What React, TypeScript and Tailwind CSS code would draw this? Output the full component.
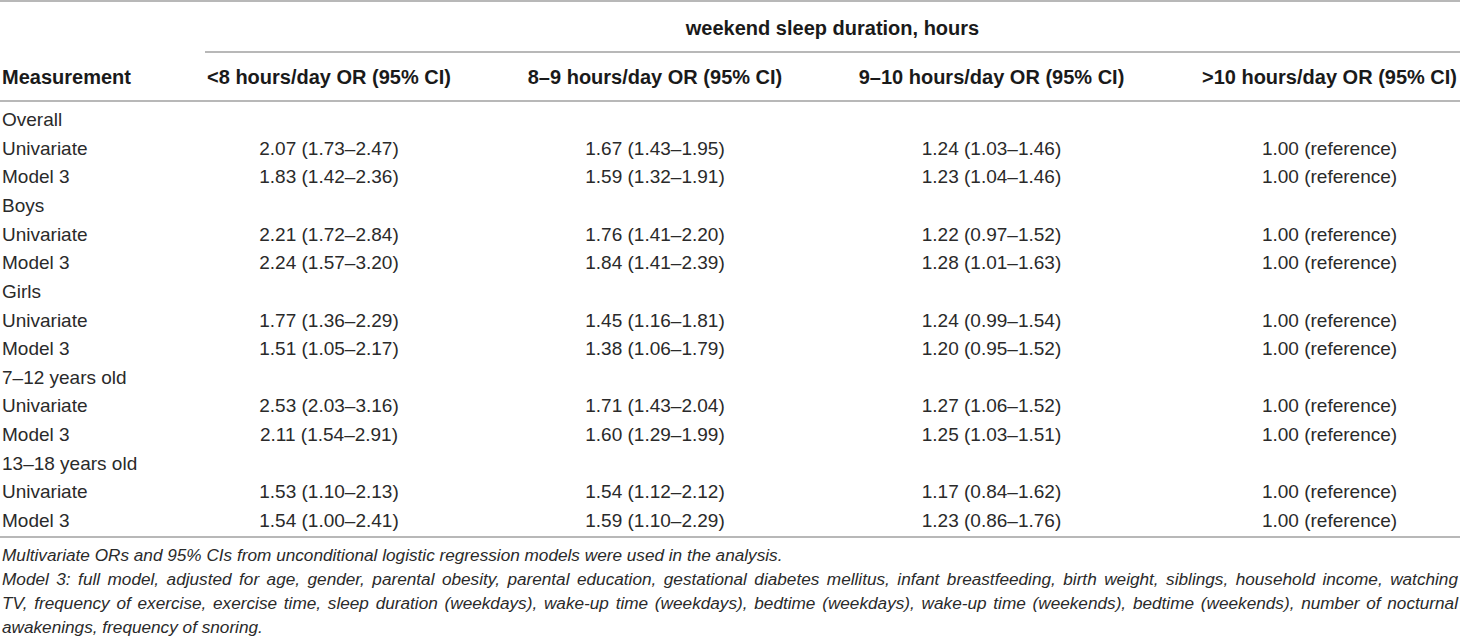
import React from "react";

type Row = { label: string; vals?: string[] };

const rows: Row[] = [
  { label: "Overall" },
  { label: "Univariate", vals: ["2.07 (1.73–2.47)", "1.67 (1.43–1.95)", "1.24 (1.03–1.46)", "1.00 (reference)"] },
  { label: "Model 3", vals: ["1.83 (1.42–2.36)", "1.59 (1.32–1.91)", "1.23 (1.04–1.46)", "1.00 (reference)"] },
  { label: "Boys" },
  { label: "Univariate", vals: ["2.21 (1.72–2.84)", "1.76 (1.41–2.20)", "1.22 (0.97–1.52)", "1.00 (reference)"] },
  { label: "Model 3", vals: ["2.24 (1.57–3.20)", "1.84 (1.41–2.39)", "1.28 (1.01–1.63)", "1.00 (reference)"] },
  { label: "Girls" },
  { label: "Univariate", vals: ["1.77 (1.36–2.29)", "1.45 (1.16–1.81)", "1.24 (0.99–1.54)", "1.00 (reference)"] },
  { label: "Model 3", vals: ["1.51 (1.05–2.17)", "1.38 (1.06–1.79)", "1.20 (0.95–1.52)", "1.00 (reference)"] },
  { label: "7–12 years old" },
  { label: "Univariate", vals: ["2.53 (2.03–3.16)", "1.71 (1.43–2.04)", "1.27 (1.06–1.52)", "1.00 (reference)"] },
  { label: "Model 3", vals: ["2.11 (1.54–2.91)", "1.60 (1.29–1.99)", "1.25 (1.03–1.51)", "1.00 (reference)"] },
  { label: "13–18 years old" },
  { label: "Univariate", vals: ["1.53 (1.10–2.13)", "1.54 (1.12–2.12)", "1.17 (0.84–1.62)", "1.00 (reference)"] },
  { label: "Model 3", vals: ["1.54 (1.00–2.41)", "1.59 (1.10–2.29)", "1.23 (0.86–1.76)", "1.00 (reference)"] },
];

const grid = "grid grid-cols-[132px_248px_258px_269px_1fr] gap-x-[73px]";

export default function App() {
  return (
    <div className="w-[1460px] h-[643px] bg-white font-['Liberation_Sans',Arial,sans-serif] overflow-hidden">
      <div className="border-t-2 border-b-2 border-[#b8b8b8]">
        <div className={grid}>
          <div className="h-[51px]" />
          <div className="col-span-4 h-[51px] border-b-2 border-[#b8b8b8] flex items-center justify-center pt-[2px] text-[20px] font-bold text-[#1a1a1a]">
            weekend sleep duration, hours
          </div>
        </div>
        <div className={`${grid} h-[47px] items-center text-[20px] font-bold text-[#1a1a1a] whitespace-nowrap`}>
          <div className="pl-[2px]">Measurement</div>
          <div className="text-center">&lt;8 hours/day OR (95% CI)</div>
          <div className="text-center">8–9 hours/day OR (95% CI)</div>
          <div className="text-center">9–10 hours/day OR (95% CI)</div>
          <div className="text-center">&gt;10 hours/day OR (95% CI)</div>
        </div>
      </div>
      <div className="border-b-2 border-[#b8b8b8] pt-[4px] pb-0 text-[19px] text-[#2a2a2a] whitespace-nowrap">
        {rows.map((r, i) => (
          <div key={i} className={`${grid} h-[28.65px] items-center`}>
            <div className="pl-[2px]">{r.label}</div>
            {r.vals ? (
              r.vals.map((v, j) => (
                <div key={j} className="text-center">
                  {v}
                </div>
              ))
            ) : (
              <>
                <div />
                <div />
                <div />
                <div />
              </>
            )}
          </div>
        ))}
      </div>
      <div className="pt-[5px] pl-[2px] pr-[2px] text-[17.2px] italic leading-[24px] text-[#2a2a2a]">
        <div className="whitespace-nowrap">Multivariate ORs and 95% CIs from unconditional logistic regression models were used in the analysis.</div>
        <div className="text-justify [text-align-last:justify]">
          Model 3: full model, adjusted for age, gender, parental obesity, parental education, gestational diabetes mellitus, infant breastfeeding, birth weight, siblings, household income, watching
        </div>
        <div className="text-justify [text-align-last:justify]">
          TV, frequency of exercise, exercise time, sleep duration (weekdays), wake-up time (weekdays), bedtime (weekdays), wake-up time (weekends), bedtime (weekends), number of nocturnal
        </div>
        <div className="whitespace-nowrap">awakenings, frequency of snoring.</div>
      </div>
    </div>
  );
}
